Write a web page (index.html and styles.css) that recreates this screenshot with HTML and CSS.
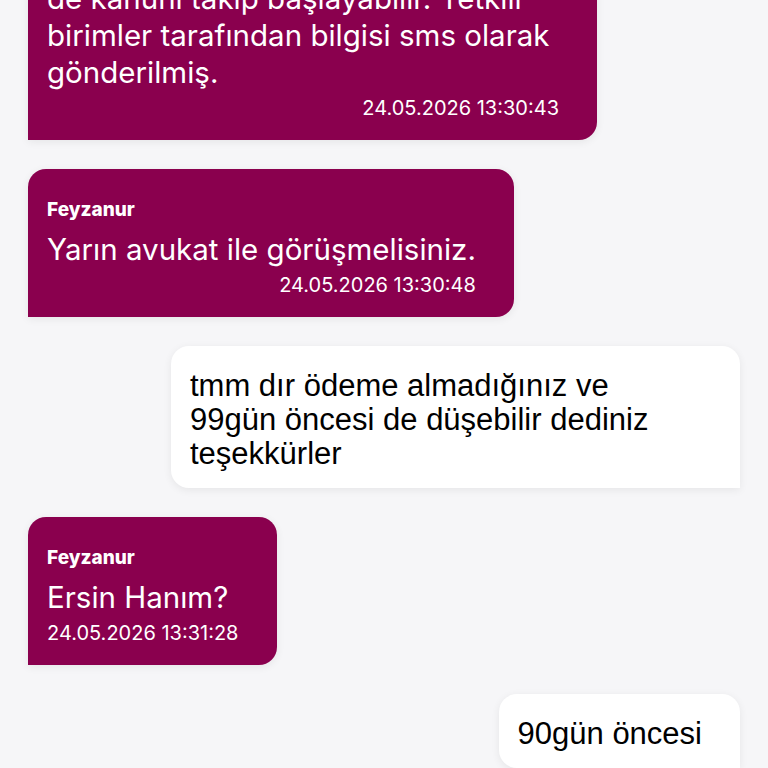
FILE: index.html
```html
<!DOCTYPE html>
<html lang="tr">
<head>
<meta charset="utf-8">
<link rel="stylesheet" href="styles.css">
</head>
<body>
<div class="chat">
  <div class="bubble in first">
    <div class="text">de kanuni takip başlayabilir. Yetkili birimler tarafından bilgisi sms olarak gönderilmiş.</div>
    <div class="time right">24.05.2026 13:30:43</div>
  </div>
  <div class="bubble in">
    <div class="name">Feyzanur</div>
    <div class="text">Yarın avukat ile görüşmelisiniz.</div>
    <div class="time right">24.05.2026 13:30:48</div>
  </div>
  <div class="bubble out">
    <div class="text">tmm dır ödeme almadığınız ve 99gün öncesi de düşebilir dediniz teşekkürler</div>
  </div>
  <div class="bubble in">
    <div class="name">Feyzanur</div>
    <div class="text">Ersin Hanım?</div>
    <div class="time">24.05.2026 13:31:28</div>
  </div>
  <div class="bubble out">
    <div class="text">90gün öncesi</div>
  </div>
</div>
</body>
</html>
```
FILE: styles.css
```css
html, body {
  margin: 0;
  padding: 0;
  background: #f6f6f8;
  height: 100%;
  overflow: hidden;
}
.chat {
  display: flex;
  flex-direction: column;
  align-items: flex-start;
  gap: 29px;
  padding: 0 28px;
}
.bubble {
  max-width: 569px;
  box-sizing: border-box;
  border-radius: 18px;
  box-shadow: 0 2px 8px rgba(0, 0, 0, 0.07);
}
.bubble.in {
  background: #8a004e;
  color: #ffffff;
  border-bottom-left-radius: 0;
  padding: 30px 38px 21px 19px;
  font-family: Inter, Roboto, sans-serif;
}
.bubble.first {
  margin-top: -40px;
  padding-top: 20px;
}
.bubble.out {
  align-self: flex-end;
  background: #ffffff;
  color: #000000;
  border-bottom-right-radius: 0;
  padding: 23px 38px 17px 19px;
  font-family: "Liberation Sans", Arial, sans-serif;
}
.name {
  font-size: 19px;
  line-height: 22px;
  font-weight: 800;
  margin-bottom: 10px;
}
.text {
  font-size: 29.5px;
  line-height: 37px;
}
.bubble.out .text {
  font-size: 31px;
  line-height: 34px;
}
.time {
  font-size: 20px;
  line-height: 22px;
  margin-top: 6px;
}
.time.right {
  text-align: right;
}
```
